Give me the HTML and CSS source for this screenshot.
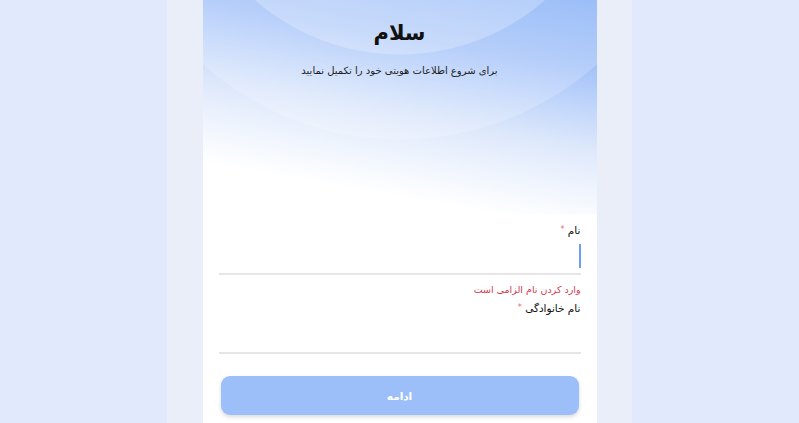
FILE: index.html
```html
<!DOCTYPE html>
<html lang="fa" dir="rtl">
<head>
<meta charset="utf-8">
<title>سلام</title>
<link rel="stylesheet" href="styles.css">
</head>
<body>
<div class="shell">
  <main class="card">
    <header class="hero">
      <h1 class="title">سلام</h1>
      <p class="subtitle">برای شروع اطلاعات هویتی خود را تکمیل نمایید</p>
    </header>
    <form class="form">
      <div class="field">
        <label class="label">نام <span class="req">*</span></label>
        <div class="input focused"><span class="caret"></span></div>
        <div class="error">وارد کردن نام الزامی است</div>
      </div>
      <div class="field">
        <label class="label">نام خانوادگی <span class="req">*</span></label>
        <div class="input"></div>
      </div>
      <button type="button" class="submit">ادامه</button>
    </form>
  </main>
</div>
</body>
</html>
```
FILE: styles.css
```css
* { box-sizing: border-box; }
html, body { margin: 0; padding: 0; }
body {
  background: #e0eafc;
  font-family: "DejaVu Sans", "Noto Sans", sans-serif;
  height: 423px;
  overflow: hidden;
}
.shell {
  width: 465px;
  margin: 0 auto;
  height: 423px;
  background: #e9eef8;
  display: flex;
  justify-content: center;
}
.card {
  width: 394px;
  background: #fff;
  display: flex;
  flex-direction: column;
}
.hero {
  height: 214px;
  display: flex;
  flex-direction: column;
  align-items: center;
  padding-top: 18px;
  background:
    radial-gradient(circle 221px at 50% -166px, rgba(255,255,255,0.24) 99.5%, rgba(255,255,255,0) 100%),
    radial-gradient(circle 296px at 50% -156px, rgba(255,255,255,0.18) 99.6%, rgba(255,255,255,0) 100%),
    linear-gradient(190deg, #86b0f7 0%, #a6c4f9 25%, #c4d8fb 40%, #dde8fb 53%, #e9f0fd 62%, #f4f8fe 72%, #ffffff 82%);
}
.title {
  margin: 0;
  font-size: 21px;
  font-weight: 700;
  color: #111;
  line-height: 30px;
}
.subtitle {
  margin: 15px 0 0;
  font-size: 10px;
  color: #1d1d1d;
  line-height: 16px;
}
.form {
  padding: 8px 16px 0;
  display: flex;
  flex-direction: column;
}
.field { display: flex; flex-direction: column; }
.label {
  font-size: 10.5px;
  font-weight: 400;
  color: #111;
  line-height: 16px;
}
.req { color: #e0687a; font-size: 8px; vertical-align: top; }
.input {
  height: 37px;
  border-bottom: 2px solid #e6e6e6;
  display: flex;
  align-items: flex-start;
  padding-top: 6px;
}
.caret {
  display: block;
  width: 2px;
  height: 24px;
  background: #6a9ef8;
}
.error {
  font-size: 9.5px;
  color: #d23a4c;
  line-height: 16px;
  margin-top: 7px;
  margin-bottom: 2px;
}
.field + .field .input { height: 38px; }
.submit {
  margin: 22px 2px 0;
  height: 39px;
  border: none;
  border-radius: 9px;
  background: #9dbff9;
  color: #fff;
  font-family: inherit;
  font-size: 10.5px;
  font-weight: 700;
  box-shadow: 0 2px 4px rgba(0,0,0,0.15);
}
```
